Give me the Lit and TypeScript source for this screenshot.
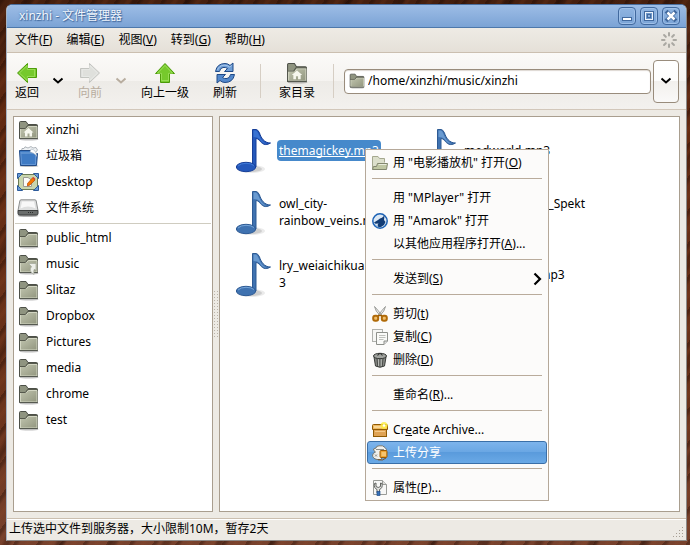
import { LitElement, html, css, svg, nothing, TemplateResult } from "lit";
import { customElement } from "lit/decorators.js";
import { classMap } from "lit/directives/class-map.js";

/* ---------- icons ---------- */

const folderBody = svg`
  <ellipse cx="11" cy="19.5" rx="9.5" ry="1" fill="#000" opacity=".25"/>
  <path d="M1.5 18.5V2.5Q1.5 1.5 2.5 1.5H8L10 4.500H18.500Q19.500 4.500 19.500 5.500V18.500Z" fill="#8f9480" stroke="#4d5048"/>
  <path d="M2.500 18V8.500H8.500L10.500 6.500H19V18Z" fill="url(#fg)" stroke="#d3d6c3" stroke-width="1"/>
  <path d="M1.500 8.500H7.500L9.500 5.500H19.500" fill="none" stroke="#55584c"/>
  <path d="M1.500 18.500H19.500" stroke="#555950"/>`;

const grad = svg`<defs><linearGradient id="fg" x1="0" y1="0" x2="1" y2="1">
  <stop offset="0" stop-color="#c0c4ae"/><stop offset="1" stop-color="#92967f"/></linearGradient></defs>`;

const folder = (extra: unknown = nothing, size = 21) => html`
  <svg width=${size} height=${size} viewBox="0 0 21 21" aria-hidden="true">${grad}${folderBody}${extra}</svg>`;

const house = svg`<path d="M10.500 8L5.500 12.500H7V16.500H9.500V13.500H11.500V16.500H14V12.500H15.500Z" fill="#f6f7ee"/>`;
const linkArrow = svg`<path d="M10.500 9.500H18V16.500L16.500 15Q15 17 16 20.500Q10 17 13.500 12.500Z" fill="#eceee8" stroke="#a4a79a" stroke-width=".7"/>`;

const trashBlue = html`<svg width="21" height="21" viewBox="0 0 21 21" aria-hidden="true">
  <ellipse cx="11" cy="20" rx="9.500" ry="1" fill="#000" opacity=".25"/>
  <path d="M3.500 5L4 2.500 6 2.500 7 .8 10 2 13 .5 15 2 18 1.500 19.500 4 17 7H5Z" fill="#eef1f3" stroke="#8f989f" stroke-width=".7"/>
  <path d="M1.500 4.500H13Q16 5 17.500 8L19.500 7.500 18.500 19.500H2.500Z" fill="#3f7bc4" stroke="#204a87"/>
  <path d="M3 7H15" stroke="#7aa8dc"/>
  <path d="M13 3Q18 3.500 19 10.500Q16 6.500 12 6Z" fill="#fff" stroke="#98a5b1" stroke-width=".5"/>
  <path d="M2.800 6L3.600 18.500H17.500V9" fill="none" stroke="#6b9cd8" stroke-width=".8"/></svg>`;

const desktopIcon = html`<svg width="22" height="18" viewBox="0 0 22 18" aria-hidden="true">
  <rect x="1.500" y="1.500" width="19" height="15" rx="1" fill="#c9d6ad" stroke="#6c7a55"/>
  <path d="M.5.5H5.500L.500 5.500ZM21.500.5V5.500L16.500 .5ZM.500 17.500V12.500L5.500 17.500ZM21.500 17.500H16.500L21.500 12.500Z" fill="#6a9bd5" stroke="#2d5b9b"/>
  <path d="M6.500 4.500H11L14.500 7V13.500H6.500Z" fill="#fbfbf8" stroke="#9b9b94"/>
  <path d="M10.500 10.500L15.500 4.800 18 7 13 12 10.500 13Z" fill="#f57900" stroke="#b74706" stroke-width=".7"/>
  <path d="M15.500 4.800L16.500 4 18.500 6 18 7Z" fill="#d33"/></svg>`;

const drive = html`<svg width="22" height="18" viewBox="0 0 22 18" aria-hidden="true">
  <ellipse cx="11" cy="16.800" rx="10.500" ry="1.200" fill="#000" opacity=".3"/>
  <path d="M4 .8H18Q19 .8 19.200 2L21 11.500H1L2.800 2Q3 .8 4 .8Z" fill="#dedfdf" stroke="#8d8f8f"/>
  <path d="M5 2.500H17L18.500 9.500Q11 5.500 3.500 9.500Z" fill="#f8f8f8"/>
  <path d="M1 11.500H21V14.500Q21 16 19.500 16H2.500Q1 16 1 14.500Z" fill="#6a6d6c" stroke="#3b3d3d"/>
  <path d="M11 13.500H17" stroke="#2c2e2e" stroke-dasharray="1 1"/></svg>`;

const bigArrow = (d: string, fill: string, stroke: string, inner: string) => html`
  <svg width="22" height="22" viewBox="0 0 22 22" aria-hidden="true">
    <path d=${d} fill=${fill} stroke=${stroke} stroke-linejoin="round"/>
    <path d=${d} transform="translate(2.200 2.200) scale(.8)" fill="none" stroke=${inner} opacity=".7"/></svg>`;
const backArrow = bigArrow("M1.500 11L11.500 1.500V6.500H20.500V15.500H11.500V20.500Z", "#76c92c", "#4a9a06", "#b8f07c");
const forwardArrow = bigArrow("M20.500 11L10.500 1.500V6.500H1.500V15.500H10.500V20.500Z", "#dfe0dc", "#c2c3bf", "#eff0ee");
const upArrow = bigArrow("M11 1.500L20.500 11.500H15.500V20.500H6.500V11.500H1.500Z", "#76c92c", "#4a9a06", "#b8f07c");

const refreshHalf = "M1.500 9.500Q3 1.500 11 1.500Q14 1.500 16 3.500L19 1V9.500H10.500L13.500 6.500Q11.500 5 9 5.500Q6 6 5.500 9.500Z";
const refreshIcon = html`<svg width="22" height="22" viewBox="0 0 22 22" aria-hidden="true">
  <path d=${refreshHalf} fill="#6f9ed6" stroke="#204a87" stroke-linejoin="round"/>
  <path d=${refreshHalf} transform="rotate(180 11 11)" fill="#5388cb" stroke="#204a87" stroke-linejoin="round"/>
  <path d="M3.500 8Q5 3.500 10 3.200Q13.500 3 15.500 5L17.800 3.500" fill="none" stroke="#b5d0f0" stroke-width=".8"/></svg>`;

const chevron = html`<svg width="12" height="8" viewBox="0 0 12 8" aria-hidden="true">
  <path d="M1.500 1.500L6 5.500L10.500 1.500" fill="none" stroke="currentColor" stroke-width="2"/></svg>`;

const spinner = html`<svg width="18" height="18" viewBox="0 0 18 18" aria-hidden="true">
  ${[0, 45, 90, 135, 180, 225, 270, 315].map(
    (a) => svg`<path d="M9 2V4.500" transform="rotate(${a} 9 9)" stroke="#aaa8a2" stroke-width="2" stroke-linecap="round"/>`
  )}</svg>`;

const note = (selected: boolean) => {
  const fill = selected ? "#2458bb" : "#3f72b0";
  const edge = selected ? "#173f98" : "#2d5a94";
  const flag = selected ? "#3f7ad8" : "#74a4d8";
  return html`<svg width="40" height="48" viewBox="0 0 40 48" aria-hidden="true">
    <ellipse cx="19" cy="43" rx="14" ry="4" fill="#000" opacity=".08"/>
    <ellipse cx="21" cy="43" rx="9" ry="3" fill="#000" opacity=".12"/>
    <path d="M20.500 3.500H24Q26 3.500 27.500 7C29 11.500 32 17 38.500 17C33 20.500 30 17.500 27.500 14.500Q26 12.500 24 12.500V41H20.500Z" fill=${fill} stroke=${edge}/>
    <path d="M21.500 4.500H24Q25.500 5 26.500 8C28.500 13 31 16.500 34.500 17.500C31 18 29 15 27.500 13Q25.500 11 21.500 11Z" fill=${flag} opacity=".8"/>
    <ellipse cx="14" cy="41" rx="9.700" ry="4.700" fill=${fill} stroke=${edge}/>
    <path d="M6 40Q9 37.300 14 37.300Q19 37.300 22 39.500" fill="none" stroke=${flag}/></svg>`;
};

const mi = (body: unknown) => html`<svg width="16" height="16" viewBox="0 0 16 16" aria-hidden="true">${body}</svg>`;
const openFolder = mi(svg`
  <path d="M.500 14.500V1.500H6L7.500 3.500H12.500V7.500" fill="#dcdfcb" stroke="#a5a88f"/>
  <path d="M.500 14.500H14.500L15.500 8.500H5.500L4.500 11.500H1.500Z" fill="#bfc6a2" stroke="#83876e"/>
  <path d="M6.500 9.500H14.500" fill="none" stroke="#e9ecdc"/>`);
const amarok = mi(svg`
  <circle cx="8" cy="8" r="7.200" fill="#dce8f4" stroke="#1c62b5" stroke-width="1.500"/>
  <path d="M2 9.500L6 7 8 5.500 10 4.800 12.500 2.500 12 7 13.500 9 12 12 9 14 6.500 14.300 5.500 12 6.500 10.500 3.500 10.700Z" fill="#123c75"/>
  <path d="M3 12Q4.500 12.500 6 14.500" stroke="#5b94d3" fill="none"/>`);
const scissors = mi(svg`
  <path d="M2.500.5Q3 5 8.500 10L9.500 9Q6 4 2.500.5ZM13.500.5Q13 5 7.500 10L6.500 9Q10 4 13.500.5Z" fill="#e8e8e6" stroke="#8b8d89" stroke-width=".8"/>
  <rect x="1.200" y="9.700" width="5" height="5" rx="2" fill="#f0bd6a" stroke="#b06a08" stroke-width="2"/>
  <rect x="9.800" y="9.700" width="5" height="5" rx="2" fill="#f0bd6a" stroke="#b06a08" stroke-width="2"/>
  <path d="M6 9.500H10" stroke="#9a5c06" stroke-width="1.500"/>`);
const copy = mi(svg`
  <rect x=".5" y=".5" width="10" height="12" fill="#f6f6f4" stroke="#b0b1ad"/>
  <path d="M4.500 3.500H15.500V12L12 15.500H4.500Z" fill="#fafaf8" stroke="#8e908b"/>
  <path d="M7 6.500H13.500M7 8.500H13.500M7 10.500H11.500" stroke="#bfc0bc"/>
  <path d="M12 15.500V12H15.500" fill="#ddd" stroke="#8e908b"/>`);
const bin = mi(svg`
  <path d="M2 5L3.500 14Q8 16.500 12.500 14L14 5Z" fill="#858783" stroke="#3a3c39"/>
  <path d="M5 6.500L5.700 14M8 7V14.500M11 6.500L10.300 14" stroke="#4a4c49"/>
  <path d="M6.500 7V14M9.200 7V14" stroke="#c4c6c2" stroke-width=".8"/>
  <ellipse cx="8" cy="4" rx="6.500" ry="2.700" fill="#a1a39f" stroke="#333532"/>
  <path d="M5.500 3.500Q8 -.5 10.500 3.500" fill="none" stroke="#333532" stroke-width="1.200"/>`);
const archive = mi(svg`
  <rect x="1.500" y="7" width="13" height="7.500" fill="#dfa253" stroke="#8f5902"/>
  <path d="M.500 3.500Q.500 2.500 1.500 2.500H14.500Q15.500 2.500 15.500 3.500V7.500H.500Z" fill="#efb75e" stroke="#8f5902"/>
  <path d="M2 5H14" stroke="#fbe0a8" stroke-width="1.500"/>
  <path d="M3 9.500H13" stroke="#f3c988"/>
  <circle cx="12" cy="3.500" r="3.500" fill="#fcec3c" opacity=".8"/><circle cx="12" cy="3.500" r="1.300" fill="#fff"/>`);
const share = mi(svg`
  <path d="M4 3Q4 1 7 .8Q11 0 13 2.500Q15 4 14.500 6.500H10V13Q9 15.500 5 14.500Q.500 13.500 .600 10Q1 8 3.500 7Q1.500 6 1.500 4Z" fill="#f1f0ec" stroke="#75766f"/>
  <path d="M4 4.500H12M3 9.500L5 11.500M5 9.500L3 11.500" stroke="#8c8d88"/>
  <rect x="8" y="5.500" width="7" height="7" rx="1" fill="#f0a531" stroke="#9c5c08"/>
  <path d="M9.500 8H14M9.500 10H14" stroke="#fbe3ae"/>
  <path d="M6 14.800Q11 16 14 13" fill="none" stroke="#7c5220"/>`);
const properties = mi(svg`
  <path d="M1.500.5H10.500L14.500 4.500V14.500H1.500Z" fill="#f7f7f6" stroke="#9a9c98"/>
  <path d="M10.500.5V4.500H14.500" fill="#dededb" stroke="#9a9c98"/>
  <path d="M2.500 3.500Q1.500 8 5 9.500V13H7.500V9.500Q11 8 10 3.500L8.500 3V6.500L6.200 7.500L4 6.500V3Z" fill="#e2e3e1" stroke="#555753" stroke-width=".9"/>
  <rect x="5" y="11.500" width="3" height="4" fill="#3570b8" stroke="#204a87" stroke-width=".7"/>`);

/* ---------- data ---------- */

type Label = [text: string, key?: string, tail?: string];

const menus: [string, string][] = [["文件", "F"], ["编辑", "E"], ["视图", "V"], ["转到", "G"], ["帮助", "H"]];

const places: [TemplateResult, string][] = [
  [folder(house), "xinzhi"],
  [trashBlue, "垃圾箱"],
  [desktopIcon, "Desktop"],
  [drive, "文件系统"],
];
const bookmarks: [TemplateResult, string][] = [
  [folder(), "public_html"],
  [folder(linkArrow), "music"],
  [folder(), "Slitaz"],
  [folder(), "Dropbox"],
  [folder(), "Pictures"],
  [folder(), "media"],
  [folder(), "chrome"],
  [folder(), "test"],
];

const files: { lines: string[]; selected?: boolean }[] = [
  { lines: ["themagickey.mp3"], selected: true },
  { lines: ["medworld.mp3"] },
  { lines: ["owl_city-", "rainbow_veins.mp3"] },
  { lines: ["Fidelity_Regina_Spekt", "or.mp3"] },
  { lines: ["lry_weiaichikuang.mp", "3"] },
  { lines: ["heartbreaker.mp3"] },
];

interface Action { label: Label; icon?: TemplateResult; submenu?: boolean; active?: boolean }
const actions: Action[][] = [
  [{ label: ["用 \"电影播放机\" 打开(", "O", ")"], icon: openFolder }],
  [
    { label: ["用 \"MPlayer\" 打开"] },
    { label: ["用 \"Amarok\" 打开"], icon: amarok },
    { label: ["以其他应用程序打开(", "A", ")..."] },
  ],
  [{ label: ["发送到(", "S", ")"], submenu: true }],
  [
    { label: ["剪切(", "t", ")"], icon: scissors },
    { label: ["复制(", "C", ")"], icon: copy },
    { label: ["删除(", "D", ")"], icon: bin },
  ],
  [{ label: ["重命名(", "R", ")..."] }],
  [
    { label: ["Cr", "e", "ate Archive..."], icon: archive },
    { label: ["上传分享"], icon: share, active: true },
  ],
  [{ label: ["属性(", "P", ")..."], icon: properties }],
];

const base = css`
  * { box-sizing: border-box; }
  svg { display: block; flex: none; }
  ul { list-style: none; margin: 0; padding: 0; }
  button, input { font: inherit; color: inherit; border: 0; background: none; padding: 0; margin: 0; }
  u { text-decoration-skip-ink: none; text-underline-offset: 1px; }
`;

/* ---------- context menu ---------- */

@customElement("context-menu")
export class ContextMenu extends LitElement {
  static styles = [base, css`
    :host { display: block; background: #fcfbfa; border: 1px solid #b5a899; padding: 1px; color: #000; }
    .item { display: flex; align-items: center; gap: 5px; width: 100%; height: 23px; padding: 0 4px; border: 1px solid transparent; border-radius: 3px; text-align: left; white-space: pre; }
    .icon { width: 16px; flex: none; }
    .text { flex: 1; }
    .active { color: #fff; border-color: #3a6fa8; background: linear-gradient(#7db4ec, #69a6e3 50%, #5a9bdc 50%, #6aa9e6); }
    .sep { height: 12px; padding: 4px 5px 0; }
    .line { height: 1px; background: #b9ab9b; }
  `];

  render() {
    return html`<ul role="menu">${actions.map((group, i) => html`
      ${i ? html`<li class="sep" role="separator"><div class="line"></div></li>` : nothing}
      ${group.map(({ label: [text, key, tail], icon, submenu, active }) => html`
        <li role="none"><button class=${classMap({ item: true, active: !!active })} role="menuitem">
          <span class="icon">${icon ?? nothing}</span>
          <span class="text">${text}${key ? html`<u>${key}</u>` : nothing}${tail ?? nothing}</span>
          ${submenu ? html`<svg width="9" height="14" viewBox="0 0 9 14" aria-hidden="true"><path d="M1.500 1.500L7 7L1.500 12.500" fill="none" stroke="#000" stroke-width="2.200"/></svg>` : nothing}
        </button></li>`)}`)}</ul>`;
  }
}

/* ---------- application ---------- */

@customElement("app-root")
export class AppRoot extends LitElement {
  static styles = [base, css`
    :host {
      display: flex; min-height: 100vh; box-sizing: border-box; position: relative; padding: 4px 3px 4px 6px;
      font: 12px/16px "Noto Sans", "Noto Sans CJK SC", sans-serif; color: #000;
      background:
        repeating-linear-gradient(125deg, rgba(20, 5, 0, .3) 0 2px, transparent 5px 8px, rgba(160, 80, 40, .12) 10px 12px, transparent 14px 19px),
        repeating-linear-gradient(118deg, transparent 0 21px, rgba(15, 3, 0, .3) 24px 27px, transparent 31px 47px),
        linear-gradient(#46200f, #642b12 25%, #6b341c 75%, #78422d);
    }
    .window { flex: 1; min-width: 0; display: flex; flex-direction: column; background: #edeae4; border: 1px solid #4a6f9f; border-right-color: #8c8a88; border-bottom-color: #8c8a88; border-left-color: #a5b3c5; border-radius: 6px 6px 0 0; overflow: hidden; }

    .titlebar { display: flex; align-items: center; height: 23px; padding: 0 6px 0 12px; background: linear-gradient(#9dbde6, #7ba3d5); border-bottom: 1px solid #4d78ab; color: #f1f6fc; }
    .title { flex: 1; margin: 0; font: inherit; text-shadow: 0 0 2px #3f6ca5, 1px 1px 1px #44689a; }
    .controls { display: flex; gap: 4px; }
    .control { width: 18px; height: 18px; border: 1px solid #41699e; border-radius: 4px; background: linear-gradient(#8fb4e1, #7ba4d6); box-shadow: inset 0 0 0 1px #9fc0e8; }

    .menubar { display: flex; align-items: center; height: 25px; padding: 0 8px; background: linear-gradient(#eeebe5, #e5e0d8); border-bottom: 1px solid #cbbfb0; }
    .menus { display: flex; gap: 14px; flex: 1; }

    .toolbar { display: flex; align-items: center; height: 57px; padding: 0 7px 0 0; background: linear-gradient(#fbfaf8, #f5f3f0 50%, #edebe7 50%, #f3f1ee); border-bottom: 1px solid #d2c7ba; }
    .history, .split, .go { display: flex; }
    .history { gap: 1px; }
    .go { gap: 8px; margin: 0 5px 0 1px; }
    .tool { display: flex; flex-direction: column; align-items: center; gap: 1px; padding: 0 8px; white-space: nowrap; }
    .arrow { display: flex; width: 22px; align-items: center; justify-content: center; }
    .off { color: #b8ad9f; }
    .divider { width: 1px; height: 34px; margin: 0 10px; background: #d6cec4; }
    .address { flex: 1; min-width: 0; display: flex; align-items: center; gap: 3px; height: 25px; padding: 0 4px; background: #fff; border: 1px solid #998c7c; border-radius: 4px; box-shadow: inset 0 1px 1px #ddd8d2; }
    .path { flex: 1; min-width: 0; }
    .drop { display: flex; align-items: center; justify-content: center; width: 26px; height: 43px; margin-left: 2px; border: 1px solid #998c7c; border-radius: 4px; background: linear-gradient(#fff, #fdfdfc 50%, #f2f0ed 50%, #faf9f8); }

    .body { flex: 1; display: flex; padding: 6px; }
    .places, .files { background: #fff; border: 1px solid #a99e8f; }
    .places { flex: none; width: 200px; }
    .place { display: flex; align-items: center; gap: 7px; height: 26px; padding-left: 3px; }
    .glyph { display: flex; justify-content: center; width: 22px; }
    .rule { height: 1px; margin: 2px 1px 1px; background: #cfccc0; }
    .handle { display: flex; align-items: center; width: 6px; }
    .grip { width: 6px; height: 48px; background: radial-gradient(circle, #bab3a8 0 1px, transparent 1px) 0 0 / 3px 3px; }
    .files { flex: 1; min-width: 0; }
    .grid { display: grid; grid-template-columns: 185px 185px; grid-auto-rows: 62px; padding: 2px 12px; }
    .file { display: flex; align-items: center; gap: 5px; }
    .name { padding: 2px; line-height: 17px; white-space: nowrap; border-radius: 4px; }
    .line { display: block; }
    .selected { background: #4689cb; color: #fff; text-decoration: underline; text-decoration-skip-ink: none; }

    .status { display: flex; align-items: center; justify-content: space-between; height: 22px; padding: 0 0 2px 2px; border-top: 1px solid #cbbfb0; box-shadow: inset 0 1px #fff; }
    .size-grip { align-self: flex-end; margin-right: 2px; }
    .popup { position: absolute; left: 365px; top: 149px; width: 184px; }
  `];

  private tool(icon: TemplateResult, text: string, disabled = false) {
    return html`<button class=${classMap({ tool: true, off: disabled })} ?disabled=${disabled}>${icon}<span>${text}</span></button>`;
  }

  private place([icon, text]: [TemplateResult, string]) {
    return html`<li class="place"><span class="glyph">${icon}</span>${text}</li>`;
  }

  render() {
    return html`
      <main class="window">
        <header class="titlebar">
          <h1 class="title">xinzhi - 文件管理器</h1>
          <div class="controls">
            <button class="control" aria-label="最小化"><svg width="16" height="16" viewBox="0 0 16 16"><rect x="3.500" y="9.500" width="9" height="3" fill="#fff" stroke="#41699e"/></svg></button>
            <button class="control" aria-label="最大化"><svg width="16" height="16" viewBox="0 0 16 16"><rect x="4.500" y="4.500" width="7" height="7" fill="none" stroke="#41699e" stroke-width="3"/><rect x="4.500" y="4.500" width="7" height="7" fill="#6f99cc" stroke="#eef4fc"/><rect x="6.500" y="6.500" width="3" height="3" fill="#8db1de" stroke="#41699e"/></svg></button>
            <button class="control" aria-label="关闭"><svg width="16" height="16" viewBox="0 0 16 16"><path d="M4.500 4.500L11.500 11.500M11.500 4.500L4.500 11.500" stroke="#41699e" stroke-width="4" stroke-linecap="square"/><path d="M4.500 4.500L11.500 11.500M11.500 4.500L4.500 11.500" stroke="#fff" stroke-width="2.500"/></svg></button>
          </div>
        </header>

        <nav class="menubar">
          <div class="menus">${menus.map(([name, key]) => html`<button>${name}(<u>${key}</u>)</button>`)}</div>
          ${spinner}
        </nav>

        <div class="toolbar">
          <div class="history">
            <div class="split">${this.tool(backArrow, "返回")}<button class="arrow" aria-label="返回历史">${chevron}</button></div>
            <div class="split">${this.tool(forwardArrow, "向前", true)}<button class="arrow off" aria-label="向前历史" disabled>${chevron}</button></div>
          </div>
          <div class="go">${this.tool(upArrow, "向上一级")}${this.tool(refreshIcon, "刷新")}</div>
          <div class="divider"></div>
          ${this.tool(folder(house, 22), "家目录")}
          <div class="divider"></div>
          <label class="address">${folder(nothing, 16)}<input class="path" aria-label="位置" value="/home/xinzhi/music/xinzhi"></label>
          <button class="drop" aria-label="位置列表">${chevron}</button>
        </div>

        <div class="body">
          <aside class="places">
            <ul>${places.map(this.place)}</ul>
            <div class="rule"></div>
            <ul>${bookmarks.map(this.place)}</ul>
          </aside>
          <div class="handle"><div class="grip"></div></div>
          <section class="files">
            <ul class="grid">${files.map((f) => html`
              <li class="file">${note(!!f.selected)}
                <span class=${classMap({ name: true, selected: !!f.selected })}>${f.lines.map((l) => html`<span class="line">${l}</span>`)}</span>
              </li>`)}</ul>
          </section>
        </div>

        <footer class="status">
          <span>上传选中文件到服务器，大小限制10M，暂存2天</span>
          <svg class="size-grip" width="12" height="12" viewBox="0 0 12 12" aria-hidden="true">
            <path d="M10 1.500h1M7 4.500h1M10 4.500h1M4 7.500h1M7 7.500h1M10 7.500h1M1 10.500h1M4 10.500h1M7 10.500h1M10 10.500h1" stroke="#a79f94"/>
          </svg>
        </footer>
      </main>
      <context-menu class="popup"></context-menu>`;
  }
}
